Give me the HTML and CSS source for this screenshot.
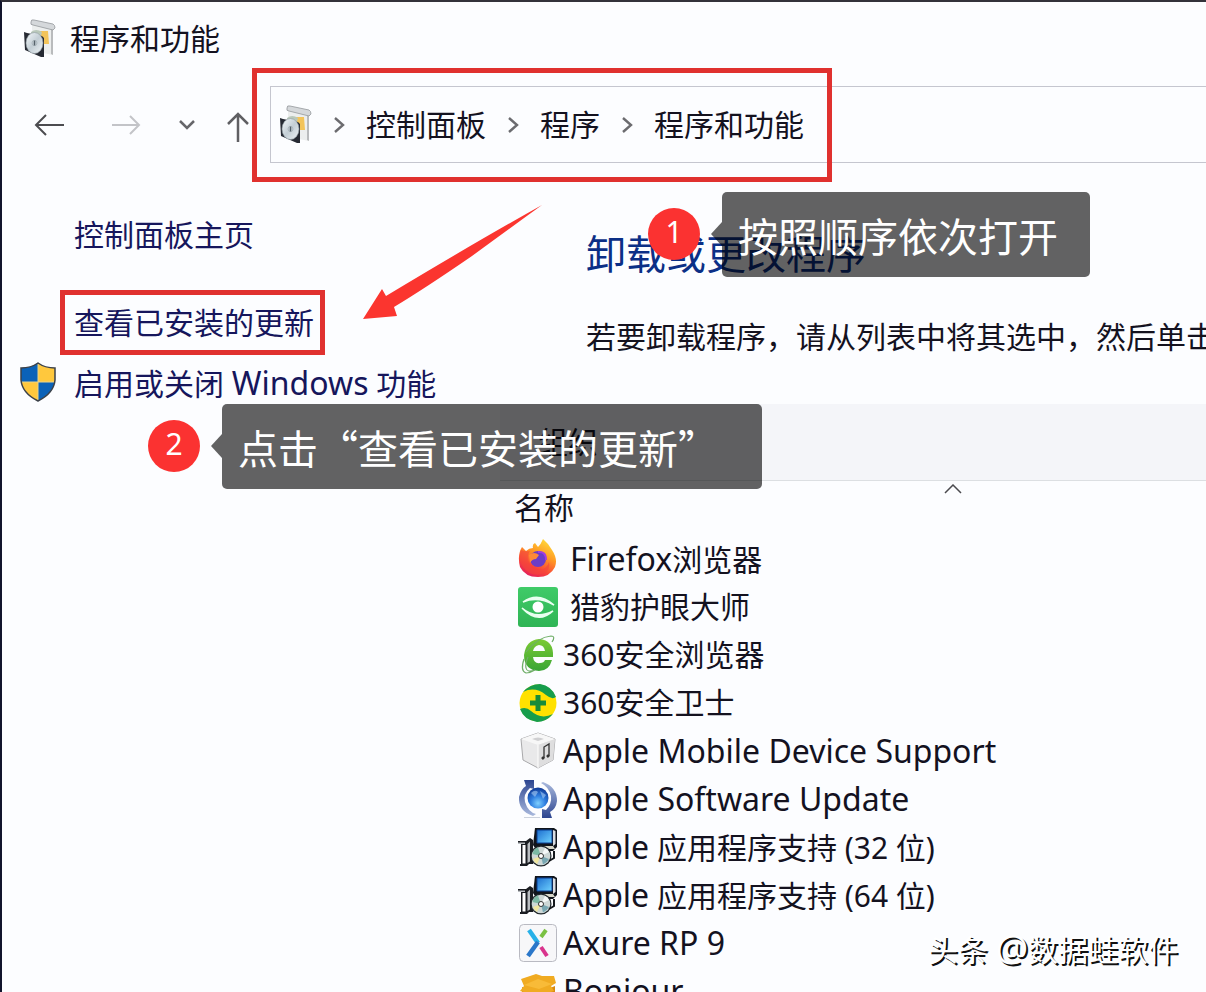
FILE: index.html
```html
<!DOCTYPE html>
<html lang="zh-CN">
<head>
<meta charset="utf-8">
<title>程序和功能</title>
<link rel="stylesheet" href="styles.css">
</head>
<body>
<svg class="defs" aria-hidden="true">
  <defs>
    <linearGradient id="g-disc" x1="0" y1="0" x2="1" y2="1"><stop offset="0" stop-color="#f4f8fa"/><stop offset=".5" stop-color="#c3ced5"/><stop offset="1" stop-color="#eef3f6"/></linearGradient>
    <linearGradient id="g-fire" x1=".8" y1="0" x2=".3" y2="1"><stop offset="0" stop-color="#ffe13c"/><stop offset=".4" stop-color="#ff9a24"/><stop offset=".75" stop-color="#f8423a"/><stop offset="1" stop-color="#e3205c"/></linearGradient>
    <linearGradient id="g-leaf" x1="0" y1="0" x2="0" y2="1"><stop offset="0" stop-color="#7ccb33"/><stop offset="1" stop-color="#39a535"/></linearGradient>
    <linearGradient id="g-green" x1="0" y1="0" x2="0" y2="1"><stop offset="0" stop-color="#3fcb68"/><stop offset="1" stop-color="#2fb455"/></linearGradient>
    <radialGradient id="g-globe" cx=".5" cy=".75" r=".7"><stop offset="0" stop-color="#7fd0ff"/><stop offset=".5" stop-color="#2f7fe0"/><stop offset="1" stop-color="#123f9c"/></radialGradient>
    <linearGradient id="g-arc" x1="0" y1="0" x2="0" y2="1"><stop offset="0" stop-color="#2c4590"/><stop offset="1" stop-color="#a9b9dd"/></linearGradient>
    <linearGradient id="g-arc2" x1="0" y1="0" x2="0" y2="1"><stop offset="0" stop-color="#a9b9dd"/><stop offset="1" stop-color="#2c4590"/></linearGradient>
    <linearGradient id="g-screen" x1="0" y1="0" x2="1" y2="1"><stop offset="0" stop-color="#1d6fd0"/><stop offset="1" stop-color="#6fd2ff"/></linearGradient>
    <symbol id="programs" viewBox="0 0 32 40">
      <path d="M8 3 29 8 29 36 14 33 8 28Z" fill="#eceeee"/>
      <path d="M27 8 29 8 29 36 27 35Z" fill="#b9bbbd"/>
      <path d="M7 3Q7 0 10 1L29 5Q31 6 31 9L29 11 9 6Q6 6 7 3Z" fill="#d5d8db" stroke="#94989c" stroke-width=".8"/>
      <path d="M11 12 24 12 25 25 18 25Z" fill="#f3c45a"/>
      <path d="M7 13Q12 9 18 13L17 17 7 16Z" fill="#b9c8ba"/>
      <path d="M0 13 3 14 18 17 20 19 20 38 17 38 1 31Z" fill="#262a33"/>
      <ellipse cx="10.500" cy="24" rx="8.500" ry="10.500" fill="url(#g-disc)" stroke="#8d999f" stroke-width=".6"/>
      <path d="M10.500 21V27" stroke="#55616a" stroke-width="1.500"/>
      <circle cx="10.500" cy="24" r="2.500" fill="none" stroke="#a5b0b6" stroke-width=".8"/>
    </symbol>
    <symbol id="chevron" viewBox="0 0 12 18"><path d="M2 2 10 9 2 16" fill="none" stroke="#6b6b6f" stroke-width="2.4"/></symbol>
    <symbol id="installer" viewBox="0 0 40 40">
      <path d="M17 1H36L39 3V20L35 24H19L15 18Z" fill="#10151c"/>
      <path d="M35 3 37.500 4V17L35 19Z" fill="#d9dde2"/>
      <path d="M19 3H34V16H19Z" fill="url(#g-screen)" stroke="#0b3f93"/>
      <path d="M22 19H35L37 22H24Z" fill="#d7d7c9"/>
      <path d="M0 14H8L12 11 15 13V37H11L9 39H2V37H3V17H0Z" fill="#1a1d22"/>
      <path d="M0 15.500H7V17H0Z" fill="#b9bdc1"/>
      <path d="M4.500 18H7.500V36.500H4.500Z" fill="#fff"/><path d="M9.500 17 12 14.500V34.500L9.500 36Z" fill="#b9bdc1"/>
      <circle cx="23" cy="29" r="10.500" fill="#22282c"/>
      <circle cx="23" cy="29" r="9.300" fill="#cdd7d6"/>
      <path d="M23 29 14.500 27Q16 21 20 20.500Z" fill="#7cb9a4"/><path d="M23 29 31 32Q29 36 25 37.500Z" fill="#78a7b2"/><path d="M23 29 19 37Q16 35 15 32Z" fill="#efe6a0"/><path d="M23 29 27 21Q30 22 31 25Z" fill="#f5f8f8"/>
      <circle cx="23" cy="29" r="2.500" fill="#fff" stroke="#333"/>
      <path d="M31 34 36 31V24" fill="none" stroke="#14181c" stroke-width="2"/>
    </symbol>
  </defs>
</svg>

<div class="window">
  <header class="titlebar">
    <svg class="icon-programs" aria-hidden="true"><use href="#programs"/></svg>
    <h1 class="title">程序和功能</h1>
  </header>

  <nav class="navbar">
    <button class="nav-btn back" aria-label="后退"><svg viewBox="0 0 32 24"><path d="M31 12H3M13 2 3 12 13 22" fill="none" stroke="#4c4c50" stroke-width="2"/></svg></button>
    <button class="nav-btn forward" aria-label="前进"><svg viewBox="0 0 32 24"><path d="M1 12H28M19 3 28 12 19 21" fill="none" stroke="#c3c4c8" stroke-width="2"/></svg></button>
    <button class="nav-btn recent" aria-label="最近位置"><svg viewBox="0 0 18 12"><path d="M2 2 9 9 16 2" fill="none" stroke="#66666a" stroke-width="2.500"/></svg></button>
    <button class="nav-btn up" aria-label="上移"><svg viewBox="0 0 24 32"><path d="M12 31V3M2 13 12 3 22 13" fill="none" stroke="#5f5f63" stroke-width="2.500"/></svg></button>
    <div class="address">
      <svg class="icon-programs" aria-hidden="true"><use href="#programs"/></svg>
      <svg class="chevron" aria-hidden="true"><use href="#chevron"/></svg>
      <a class="crumb" href="#">控制面板</a>
      <svg class="chevron" aria-hidden="true"><use href="#chevron"/></svg>
      <a class="crumb" href="#">程序</a>
      <svg class="chevron" aria-hidden="true"><use href="#chevron"/></svg>
      <a class="crumb" href="#">程序和功能</a>
    </div>
  </nav>

  <div class="content">
    <aside class="sidebar">
      <a class="task home" href="#">控制面板主页</a>
      <a class="task marked" href="#">查看已安装的更新</a>
      <a class="task shielded" href="#">
        <svg class="shield" viewBox="0 0 36 40" aria-hidden="true">
          <path d="M18 1Q25 6 35 6V18Q34 31 18 39Q2 31 1 18V6Q11 6 18 1Z" fill="#ffc83d"/>
          <path d="M18 1V20H1V6Q11 6 18 1ZM18 20H35Q33 31 18 39Z" fill="#0b62b8"/>
          <path d="M18 1V39M1 20H35" stroke="#e9d48b" stroke-width="1"/>
          <path d="M18 1Q25 6 35 6V18Q34 31 18 39Q2 31 1 18V6Q11 6 18 1Z" fill="none" stroke="#3b4149" stroke-width="1.500"/>
        </svg>
        启用或关闭 <span class="latin">Windows</span> 功能</a>
    </aside>

    <main class="main">
      <h2 class="heading">卸载或更改程序</h2>
      <p class="hint">若要卸载程序，请从列表中将其选中，然后单击“卸载”</p>
      <div class="toolbar"><button class="organize">组织</button></div>
      <table class="programs">
        <thead>
          <tr><th scope="col">名称<svg class="sort" viewBox="0 0 18 10" aria-hidden="true"><path d="M1 9 9 1 17 9" fill="none" stroke="#4a4a4e" stroke-width="1.500"/></svg></th></tr>
        </thead>
        <tbody>
          <tr><td><div class="program spaced">
            <svg viewBox="0 0 40 40" aria-hidden="true"><path d="M4 8 8 12Q11 9 15 9Q14 5 17 4L20 8Q23 5 25 0Q31 5 34 11Q40 20 37 28Q32 38 20 38Q7 38 2 28Q-1 16 4 8Z" fill="url(#g-fire)"/><path d="M3 11Q7 13 12 12Q9 16 10 22Q13 31 21 31Q29 30 31 23Q33 32 24 35Q12 38 5 28Q0 19 3 11Z" fill="#f4463c" opacity=".6"/><circle cx="20" cy="20" r="8" fill="#6b3cc8"/><path d="M11 16Q16 12 21 16L18 20Q14 20 12 24Z" fill="#ff8a36"/><path d="M20 13Q28 12 28 21" fill="none" stroke="#a13de0" stroke-width="2"/></svg>
            <span><span class="latin">Firefox</span>浏览器</span></div></td></tr>
          <tr><td><div class="program spaced">
            <svg viewBox="0 0 40 40" aria-hidden="true"><rect width="40" height="40" rx="3" fill="url(#g-green)"/><path d="M5 15Q20 4 36 18Q20 9 5 15ZM4 21Q18 33 35 24Q20 38 4 21Z" fill="#e9fff0" stroke="#e9fff0" stroke-width="1.500"/><circle cx="20" cy="20" r="5.500" fill="#fff"/></svg>
            <span>猎豹护眼大师</span></div></td></tr>
          <tr><td><div class="program">
            <svg viewBox="0 0 40 40" aria-hidden="true"><path d="M35 22H15Q16 29 22 28Q26 28 27 25H34Q31 36 21 36Q6 35 6 20Q8 5 21 4Q36 5 35 22ZM15 16H27Q26 10 21 10Q16 11 15 16Z" fill="url(#g-leaf)" fill-rule="evenodd"/><path d="M6 24Q2 36 8 38Q12 38 17 35Q9 38 8 33Q7 29 10 22M8 17Q20 2 33 1Q38 1 34 7" fill="none" stroke="#6fae68" stroke-width="1.200"/></svg>
            <span>360安全浏览器</span></div></td></tr>
          <tr><td><div class="program">
            <svg viewBox="0 0 40 40" aria-hidden="true"><circle cx="20" cy="20" r="18.500" fill="#ffe100"/><path d="M5 9Q12 1 22 1Q34 3 38 14Q34 17 28 12Q17 3 5 9Z" fill="#169d4c"/><path d="M35 31Q28 39 19 39Q6 37 2 26Q8 23 13 28Q23 37 35 31Z" fill="#169d4c"/><path d="M17.500 12H22.500V17.500H28V22.500H22.500V28H17.500V22.500H12V17.500H17.500Z" fill="#168c3a"/></svg>
            <span>360安全卫士</span></div></td></tr>
          <tr><td><div class="program">
            <svg viewBox="0 0 40 40" aria-hidden="true"><path d="M20 2 37 8 35 29 20 37 5 29 3 8Z" fill="#e9e9ea" stroke="#a9a9ab"/><path d="M20 2 37 8 20 14 3 8Z" fill="#f7f7f7"/><path d="M20 14 37 8 35 29 20 37Z" fill="#dededf"/><path d="M20 14V37" stroke="#fff"/><path d="M14 8Q20 5 26 8L20 10Z" fill="#cfcfd1"/><path d="M26 27V16L31 13V25" fill="none" stroke="#333" stroke-width="1.300"/><path d="M24 28 26 26M29 26 31 24" stroke="#333" stroke-width="2.500"/></svg>
            <span class="latin">Apple Mobile Device Support</span></div></td></tr>
          <tr><td><div class="program">
            <svg viewBox="0 0 40 40" aria-hidden="true"><path d="M15 37Q0 32 1 18Q3 10 8 7L6 1H16V10L12 9Q5 15 7 23Q10 33 18 35Z" fill="url(#g-arc)"/><path d="M25 3Q39 8 39 22Q38 30 32 33L34 39H24V30L28 31Q34 25 33 17Q31 8 23 4Z" fill="url(#g-arc2)"/><circle cx="20" cy="19" r="10.500" fill="url(#g-globe)"/><path d="M13 14Q17 10 20 13L17 18ZM22 12 28 16 25 20Z" fill="#a7ccf4" opacity=".6"/><path d="M6 38.500H22" stroke="#ccd2dd"/></svg>
            <span class="latin">Apple Software Update</span></div></td></tr>
          <tr><td><div class="program"><svg aria-hidden="true"><use href="#installer"/></svg><span><span class="latin">Apple</span> 应用程序支持 (32 位)</span></div></td></tr>
          <tr><td><div class="program"><svg aria-hidden="true"><use href="#installer"/></svg><span><span class="latin">Apple</span> 应用程序支持 (64 位)</span></div></td></tr>
          <tr><td><div class="program">
            <svg viewBox="0 0 40 40" aria-hidden="true"><rect x="1.500" y="1.500" width="37" height="37" rx="4" fill="#f7f7f9" stroke="#b9bac2"/><path d="M11 7 20 20" stroke="#27b0e8" stroke-width="4.500"/><path d="M20 19 10 33" stroke="#2b77c9" stroke-width="4.500"/><path d="M28 7 23 14" stroke="#7ac143" stroke-width="4"/><path d="M23 24 29 33" stroke="#d9338c" stroke-width="4"/></svg>
            <span class="latin">Axure RP 9</span></div></td></tr>
          <tr><td><div class="program">
            <svg viewBox="0 0 40 40" aria-hidden="true"><path d="M4 16 20 22 37 15V32L20 39 4 33Z" fill="#d98a10"/><path d="M3 8 18 3 24 5 36 5 38 12 33 15 36 20 20 25 2 20 6 15Z" fill="#f0ab22"/><path d="M6 14 20 8 34 13 21 18Z" fill="#f8bb38"/></svg>
            <span class="latin">Bonjour</span></div></td></tr>
        </tbody>
      </table>
    </main>
  </div>

  <div class="frame" aria-hidden="true"></div>
  <svg class="arrow" viewBox="0 0 180 116" aria-hidden="true"><path d="M180 0Q112 38 24 91L20 84 1 114 35 111 32 102Q62 84 110 51Q140 29 180 0Z" fill="#fb352f"/></svg>
  <div class="step step-one"><span class="badge">1</span><p class="callout">按照顺序依次打开</p></div>
  <div class="step step-two"><span class="badge">2</span><p class="callout wide">点击“查看已安装的更新”</p></div>
  <div class="watermark">头条 <span class="at">@</span>数据蛙软件</div>
</div>
</body>
</html>
```
FILE: styles.css
```css
* { box-sizing: border-box; }

body {
  margin: 0;
  font: 30px/40px "Noto Sans", "Noto Sans CJK SC", sans-serif;
  color: #14121f;
  overflow: hidden;
}

h1, h2, p { margin: 0; font-weight: 400; }
a { color: inherit; text-decoration: none; }
button { padding: 0; border: 0; background: none; font: inherit; color: inherit; }
svg { display: block; flex: none; }
.defs { position: absolute; width: 0; height: 0; }
.latin { font-size: 32px; }

.window {
  position: relative;
  height: 100vh;
  overflow: hidden;
  background: #fcfdff;
  border-top: 2px solid #33323a;
  border-left: 2px solid #11142c;
}

.titlebar { display: flex; align-items: center; gap: 14px; padding: 17px 22px 0; }
.title { font-size: 30px; }
.icon-programs { width: 32px; height: 40px; }

.navbar { display: flex; align-items: center; margin-top: 27px; padding-left: 31px; }
.back svg, .forward svg { width: 32px; height: 24px; }
.forward { margin-left: 46px; }
.recent { margin-left: 35px; }
.recent svg { width: 18px; height: 12px; }
.up { margin-left: 30px; padding-top: 4px; }
.up svg { width: 24px; height: 32px; }
.address {
  display: flex;
  flex: 1;
  align-items: center;
  height: 77px;
  margin-left: 20px;
  padding-left: 9px;
  border: solid #c5c6cf;
  border-width: 1px 0 1px 1px;
  white-space: nowrap;
}
.chevron { width: 12px; height: 18px; margin: 0 21px; }

.content { display: grid; grid-template-columns: 498px 1fr; }

.sidebar { padding: 52px 0 0 72px; color: #16165c; }
.task { display: block; white-space: nowrap; }
.home { margin-bottom: 50px; }
.marked {
  width: fit-content;
  margin: -15px -14px 8px;
  padding: 8px 6px 7px 9px;
  border: 5px solid #e0312f;
}
.shielded { position: relative; }
.shield { position: absolute; left: -54px; top: -1px; width: 36px; height: 40px; }

.main { min-width: 0; padding-top: 61px; }
.heading { padding-left: 86px; font-size: 40px; line-height: 60px; color: #0b2f86; }
.hint { margin-top: 33px; padding-left: 86px; white-space: nowrap; overflow: hidden; }
.toolbar {
  display: flex;
  align-items: center;
  height: 77px;
  margin-top: 47px;
  padding-left: 38px;
  background: #f4f5f9;
  border-bottom: 1px solid #dcdfe2;
}

.programs { width: 100%; border-collapse: collapse; }
.programs th { position: relative; height: 54px; padding: 0 14px; font-weight: 400; text-align: left; }
.programs td { height: 48px; padding: 0 18px; }
.sort { position: absolute; left: 444px; top: 3px; width: 18px; height: 10px; }
.program { display: flex; align-items: center; gap: 5px; height: 40px; white-space: nowrap; }
.program svg { width: 40px; height: 40px; }
.program.spaced { gap: 12px; }

.frame {
  position: absolute;
  left: 250px;
  top: 66px;
  width: 580px;
  height: 114px;
  border: 5px solid #e0312f;
}
.arrow { position: absolute; left: 360px; top: 203px; width: 180px; height: 116px; }

.step { position: absolute; display: flex; align-items: center; gap: 22px; color: #fff; }
.step-one { left: 646px; top: 190px; }
.step-two { left: 146px; top: 402px; }
.badge {
  width: 52px;
  height: 52px;
  margin-bottom: 2px;
  border-radius: 50%;
  background: #fb3231;
  line-height: 48px;
  text-align: center;
}
.callout {
  position: relative;
  min-width: 368px;
  padding: 13px 16px 12px;
  border-radius: 5px;
  background: rgba(0, 0, 0, 0.61);
  font-family: "Noto Sans CJK SC", sans-serif;
  font-size: 40px;
  line-height: 60px;
  white-space: nowrap;
}
.wide { min-width: 540px; }
.callout::before {
  content: "";
  position: absolute;
  right: 100%;
  top: 30px;
  border: solid transparent;
  border-width: 12px 11px 12px 0;
  border-right-color: rgba(0, 0, 0, 0.61);
}

.watermark {
  position: absolute;
  right: 28px;
  bottom: 22px;
  color: #fff;
  text-shadow: 2px 2px 0 #111;
}
.at { font-size: 36px; }
```
